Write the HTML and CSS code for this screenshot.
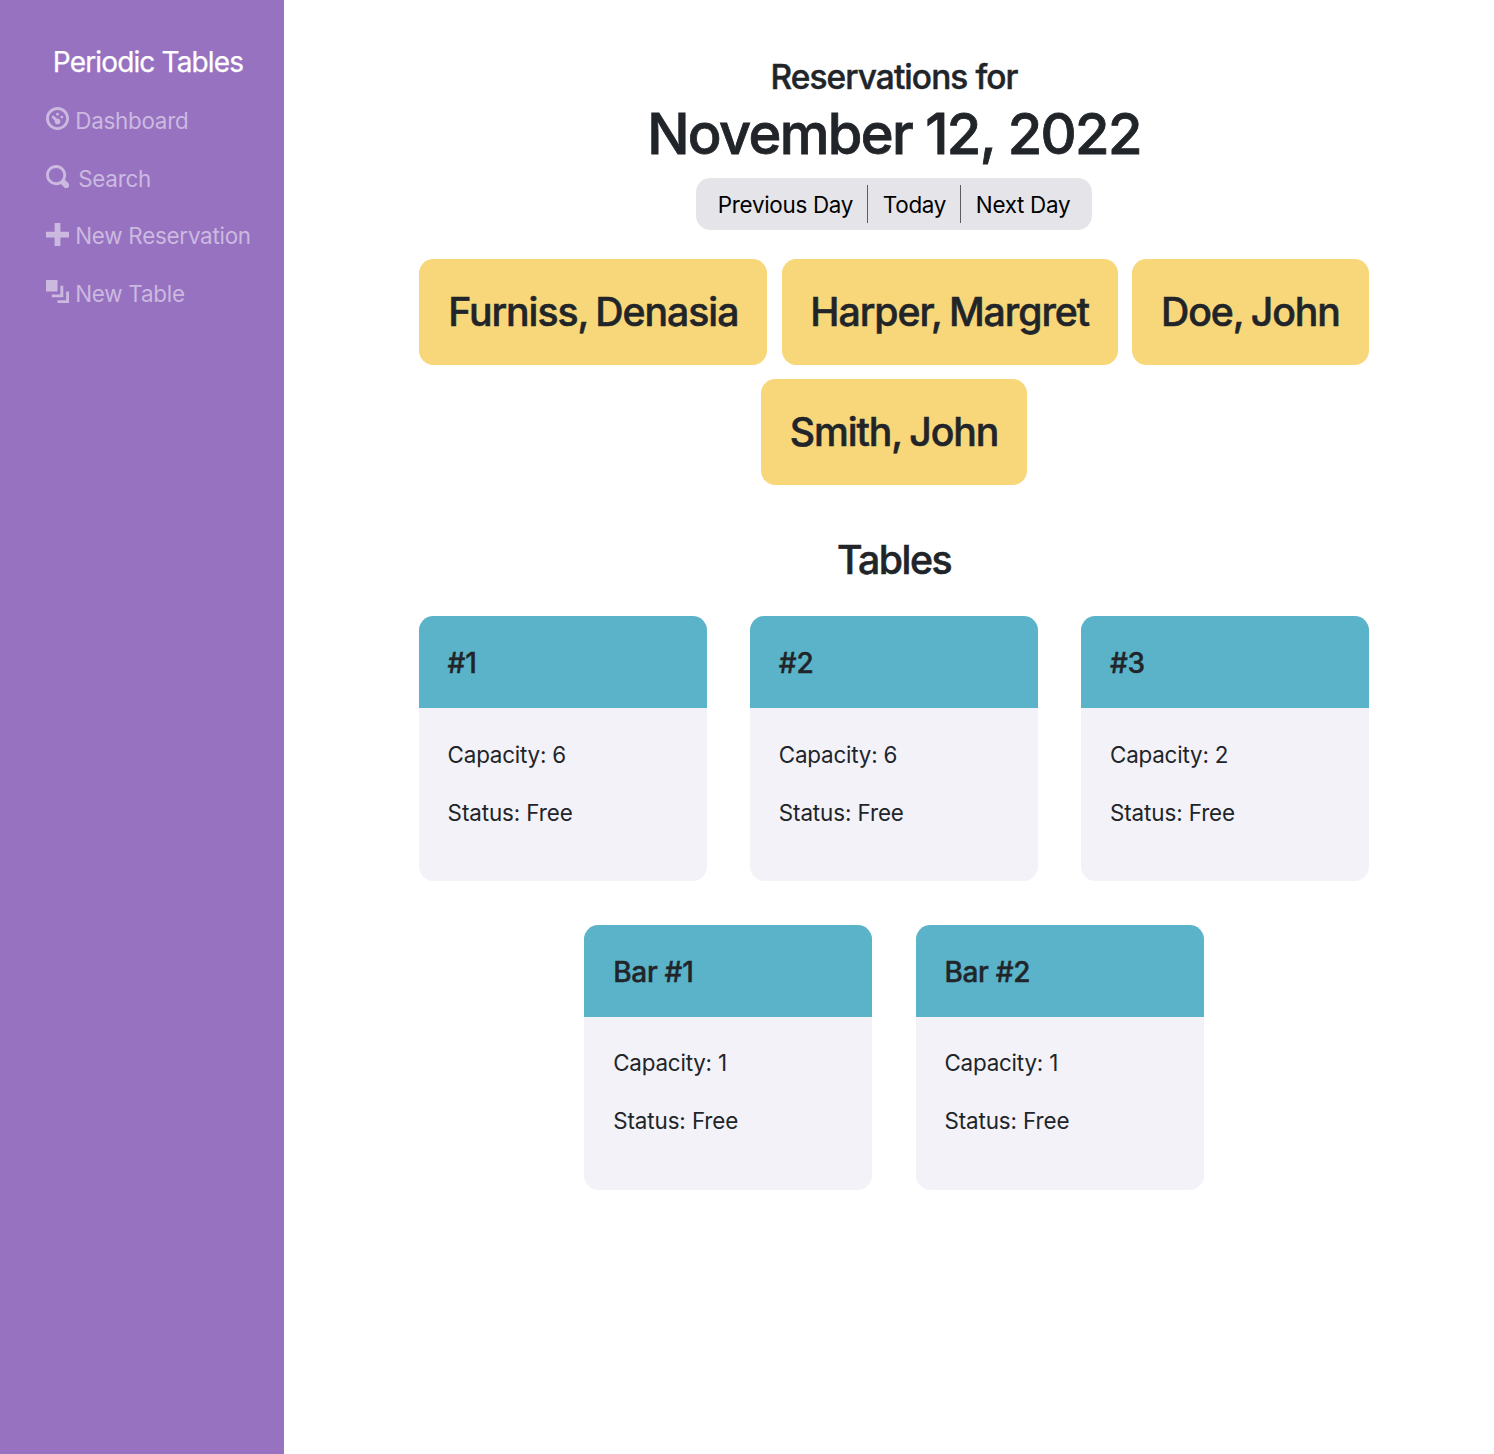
FILE: index.html
```
<!DOCTYPE html>
<html lang="en">
<head>
<meta charset="utf-8">
<title>Periodic Tables</title>
<link rel="stylesheet" href="styles.css">
</head>
<body>
<div class="app">
  <nav class="sidebar">
    <a class="brand">Periodic Tables</a>
    <ul class="menu">
      <li><svg class="icon" viewBox="0 0 8 8"><path d="M4 0c-2.2 0-4 1.8-4 4s1.8 4 4 4 4-1.8 4-4-1.8-4-4-4zm0 1c1.66 0 3 1.34 3 3s-1.34 3-3 3-3-1.34-3-3 1.34-3 3-3zm0 1c-.28 0-.5.22-.5.5s.22.5.5.5.5-.22.5-.5-.22-.5-.5-.5zm-1.66 1a.5.5 0 0 0-.19.84l.91.91c-.02.08-.06.16-.06.25 0 .55.45 1 1 1s1-.45 1-1-.45-1-1-1c-.09 0-.17.04-.25.06l-.91-.91a.5.5 0 0 0-.44-.16.5.5 0 0 0-.06 0zm3.16 0c-.28 0-.5.22-.5.5s.22.5.5.5.5-.22.5-.5-.22-.5-.5-.5z"/></svg><span>Dashboard</span></li>
      <li><svg class="icon" viewBox="0 0 8 8"><path d="M3.5 0c-1.93 0-3.5 1.57-3.5 3.5s1.57 3.5 3.5 3.5c.59 0 1.17-.14 1.66-.41a1 1 0 0 0 .13.13l1 1a1.02 1.02 0 1 0 1.44-1.44l-1-1a1 1 0 0 0-.16-.13c.27-.49.44-1.06.44-1.66 0-1.93-1.55-3.5-3.5-3.5zm0 1c1.39 0 2.5 1.11 2.5 2.5 0 .66-.24 1.27-.66 1.72l-.03.03a1 1 0 0 0-.13.13c-.44.4-1.04.63-1.69.63-1.39 0-2.5-1.11-2.5-2.5s1.11-2.5 2.5-2.5z"/></svg><span class="spaced">Search</span></li>
      <li><svg class="icon" viewBox="0 0 8 8"><path d="M3 0v3h-3v2h3v3h2v-3h3v-2h-3v-3h-2z"/></svg><span>New Reservation</span></li>
      <li><svg class="icon" viewBox="0 0 8 8"><path d="M0 0v4h4v-4h-4zM5 2v3h-3v1h4v-4h-1zM7 4v3h-3v1h4v-4h-1z"/></svg><span>New Table</span></li>
    </ul>
  </nav>
  <main class="content">
    <h2 class="subtitle">Reservations for</h2>
    <h1 class="date">November 12, 2022</h1>
    <div class="day-nav">
      <button class="day">Previous Day</button>
      <button class="day">Today</button>
      <button class="day">Next Day</button>
    </div>
    <section class="reservations">
      <h3 class="reservation">Furniss, Denasia</h3>
      <h3 class="reservation">Harper, Margret</h3>
      <h3 class="reservation">Doe, John</h3>
      <h3 class="reservation">Smith, John</h3>
    </section>
    <h3 class="tables-title">Tables</h3>
    <section class="tables">
      <article class="table-card"><h5 class="table-name">#1</h5><div class="table-info"><p>Capacity: 6</p><p class="status">Status: Free</p></div></article>
      <article class="table-card"><h5 class="table-name">#2</h5><div class="table-info"><p>Capacity: 6</p><p class="status">Status: Free</p></div></article>
      <article class="table-card"><h5 class="table-name">#3</h5><div class="table-info"><p>Capacity: 2</p><p class="status">Status: Free</p></div></article>
      <article class="table-card"><h5 class="table-name">Bar #1</h5><div class="table-info"><p>Capacity: 1</p><p class="status">Status: Free</p></div></article>
      <article class="table-card"><h5 class="table-name">Bar #2</h5><div class="table-info"><p>Capacity: 1</p><p class="status">Status: Free</p></div></article>
    </section>
  </main>
</div>
</body>
</html>
```
FILE: styles.css
```
* { box-sizing: border-box; }
body {
  margin: 0;
  background: #fff;
  color: #212529;
  font-family: Inter, "Liberation Sans", sans-serif;
  font-size: 22.4px;
  line-height: 34.56px;
  letter-spacing: -0.2px;
}
h1, h2, h3, h5, p, ul { margin: 0; padding: 0; font-weight: 500; }
h1, h2, h3, h5 { -webkit-text-stroke: 0.014em currentColor; }
p { font-weight: 400; }
.app { display: flex; min-height: 1454px; }
.sidebar {
  width: 284px;
  flex: none;
  padding: 41px 0 0 46.4px;
  background: #9772c1;
}
.brand {
  display: block;
  padding-left: 6.4px;
  height: 43px;
  line-height: 43px;
  font-size: 28px;
  letter-spacing: -0.85px;
  color: #fff;
  -webkit-text-stroke: 0.25px currentColor;
}
.menu { list-style: none; padding-top: 8.4px; }
.menu li {
  display: flex;
  align-items: center;
  height: 57.6px;
  gap: 5.8px;
  font-weight: 400;
  letter-spacing: -0.25px;
  color: #cbb9e0;
  white-space: nowrap;
}
.icon { width: 23.04px; height: 23.04px; fill: currentColor; margin-bottom: 4.6px; }
.spaced { padding-left: 3px; }
.content {
  flex: 1;
  display: flex;
  flex-direction: column;
  align-items: center;
  padding: 57px 0 0 10px;
}
.subtitle { font-size: 33.4px; line-height: 41.5px; letter-spacing: -0.9px; }
.date {
  margin-top: 1.5px;
  font-size: 56px;
  line-height: 69px;
  letter-spacing: -1.65px;
  word-spacing: 0;
}
.day-nav {
  display: flex;
  align-items: center;
  height: 52px;
  margin-top: 9px;
  padding: 0 7.2px;
  border-radius: 14.4px;
  background: #e5e4e9;
}
.day {
  height: 38px;
  padding: 2px 14.4px 0;
  border: 0;
  background: none;
  color: #000;
  font: inherit;
  letter-spacing: -0.29px;
  white-space: nowrap;
}
.day + .day { border-left: 1px solid #5c5c60; }
.reservations {
  display: flex;
  flex-wrap: wrap;
  justify-content: center;
  gap: 14.4px;
  width: 980px;
  margin-top: 28.7px;
}
.reservation {
  height: 106px;
  padding: 0 28.8px;
  border-radius: 14.4px;
  background: #f8d77a;
  font-size: 39.2px;
  line-height: 106.6px;
  letter-spacing: -1.05px;
  word-spacing: -2px;
}
.tables-title {
  margin-top: 51.3px;
  font-size: 39.2px;
  line-height: 48px;
  letter-spacing: -1.5px;
}
.tables {
  display: flex;
  flex-wrap: wrap;
  justify-content: center;
  gap: 43.2px;
  width: 960px;
  margin-top: 31.9px;
}
.table-card {
  width: 288px;
  height: 265.2px;
  border-radius: 14.4px;
  background: #f3f2f8;
  overflow: hidden;
}
.table-name {
  height: 92.2px;
  padding: 0 28.8px;
  background: #5ab3c8;
  font-size: 28px;
  line-height: 94.4px;
  letter-spacing: -0.3px;
}
.table-info { padding: 29.5px 28.8px; }
.table-info p { margin-bottom: 23.04px; }
.table-info .status { letter-spacing: -0.1px; }
```
